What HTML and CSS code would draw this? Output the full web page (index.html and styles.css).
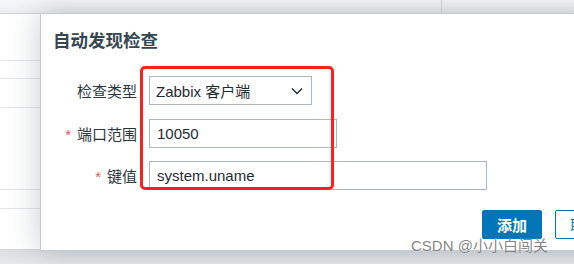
FILE: index.html
```html
<!DOCTYPE html>
<html lang="zh-CN">
<head>
    <meta charset="UTF-8">
    <title>自动发现检查</title>
    <link rel="stylesheet" href="styles.css">
</head>
<body>
    <div class="page">
        <div class="topbar">
            <div class="topcell first"></div>
            <div class="topcell"></div>
        </div>
        <div class="rows">
            <div class="row r1"></div>
            <div class="row r2"></div>
            <div class="row r3"></div>
            <div class="row r4"></div>
            <div class="row r5"></div>
        </div>
        <div class="footer"></div>
    </div>

    <div class="dialog">
        <h4 class="dialog-title">自动发现检查</h4>
        <div class="form">
            <label class="label">检查类型</label>
            <div class="select">
                <span>Zabbix 客户端</span>
                <svg class="arrow" width="12" height="8" viewBox="0 0 12 8">
                    <polyline points="1,1.5 6,6.5 11,1.5" fill="none" stroke="#1f2c33" stroke-width="1.4"/>
                </svg>
            </div>

            <label class="label"><span class="req">*</span>端口范围</label>
            <input class="field port" type="text" value="10050">

            <label class="label"><span class="req">*</span>键值</label>
            <input class="field key" type="text" value="system.uname">
        </div>
        <div class="buttons">
            <button class="btn primary">添加</button>
            <button class="btn alt">取消</button>
        </div>
    </div>

    <div class="mark"></div>
    <div class="watermark">CSDN @小小白闯关</div>
</body>
</html>
```

FILE: styles.css
```css
html, body {
    margin: 0;
    padding: 0;
}
body {
    width: 574px;
    height: 264px;
    overflow: hidden;
    position: relative;
    background: #fff;
    font-family: "Liberation Sans", Arial, "Noto Sans CJK SC", sans-serif;
    color: #1f2c33;
}
.page {
    height: 264px;
    display: flex;
    flex-direction: column;
}
.topbar {
    height: 13px;
    display: flex;
    background: linear-gradient(#f6f7f8, #eceef0);
    border-bottom: 1px solid #cfd5d9;
}
.topcell {
    flex: 1;
}
.topcell.first {
    flex: none;
    width: 441px;
    border-right: 1px solid #d4d9dd;
}
.rows {
    flex: 1;
    position: relative;
}
.row {
    border-bottom: 1px solid #e3e6e9;
}
.r1 { height: 46px; }
.r2 { height: 17px; }
.r3 { height: 28px; }
.r4 { height: 81px; }
.r5 { height: 18px; }
.footer {
    height: 14px;
    background: linear-gradient(#dcdfe2, #e6e8ea);
    border-top: 1px solid #d2d6da;
}

.dialog {
    position: absolute;
    left: 40px;
    top: 13px;
    width: 600px;
    height: 236px;
    background: #fff;
    border: 1px solid #c3cad0;
    box-shadow: 0 0 28px rgba(60, 75, 90, 0.28);
}
.dialog-title {
    margin: 0;
    padding: 14px 0 0 12px;
    font-size: 17.5px;
    line-height: 26px;
    font-weight: bold;
    color: #364652;
}
.form {
    display: grid;
    grid-template-columns: 84px auto;
    column-gap: 12px;
    row-gap: 13.5px;
    margin: 22px 0 0 12px;
    justify-items: start;
}
.label {
    justify-self: end;
    align-self: center;
    font-size: 15px;
    color: #2b3740;
}
.req {
    color: #e45959;
    margin-right: 6px;
}
.select, .field {
    box-sizing: border-box;
    height: 29px;
    border: 1px solid #acb7bf;
    background: #fff;
    font-family: inherit;
    font-size: 15px;
    color: #1f2c33;
}
.select {
    width: 163px;
    display: flex;
    align-items: center;
    justify-content: space-between;
    padding: 0 8px 0 6px;
}
.arrow {
    margin-top: 1px;
}
.field {
    padding: 0 7px;
    outline: none;
}
.port { width: 188px; }
.key { width: 338px; }

.buttons {
    display: flex;
    gap: 13px;
    margin: 20px 0 0 441px;
}
.btn {
    box-sizing: border-box;
    height: 29px;
    padding: 0 14px;
    font-family: inherit;
    font-size: 15px;
    border-radius: 2px;
    border: 1px solid #0275b8;
}
.primary {
    width: 60px;
    background: #0275b8;
    color: #fff;
    font-weight: bold;
}
.alt {
    background: #fff;
    color: #0275b8;
}

.mark {
    position: absolute;
    left: 140px;
    top: 66px;
    width: 188px;
    height: 118px;
    border: 3px solid #ff1f1f;
    border-radius: 5px;
}
.watermark {
    position: absolute;
    left: 411px;
    top: 236px;
    font-size: 15px;
    line-height: 20px;
    color: rgba(110, 110, 110, 0.85);
    text-shadow: 0 0 1px #fff;
}
```
